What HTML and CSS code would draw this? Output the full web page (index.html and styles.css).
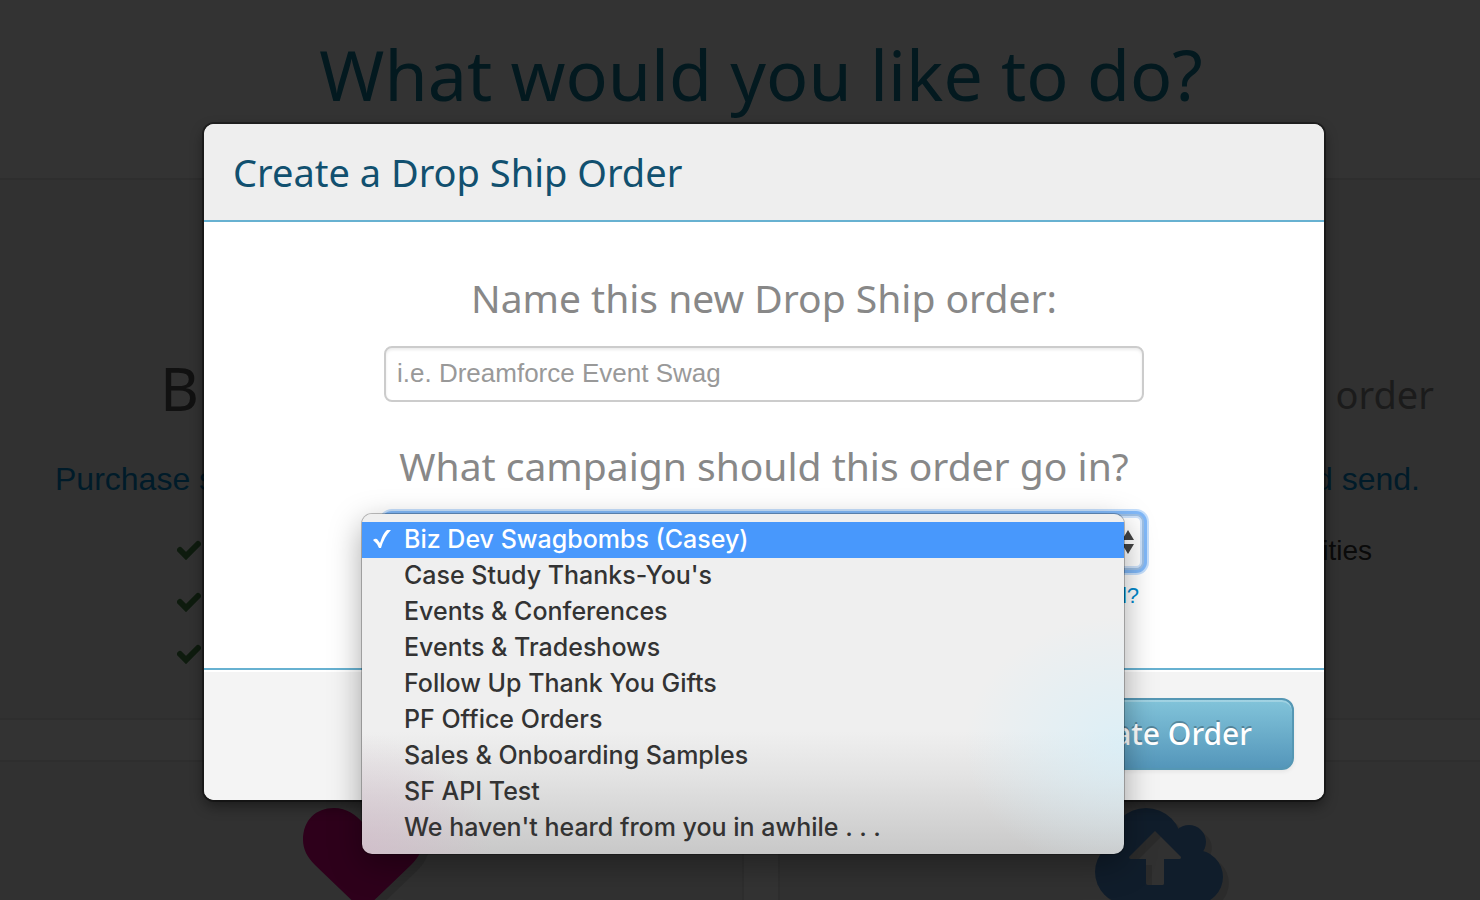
FILE: index.html
```html
<!DOCTYPE html>
<html lang="en">
<head>
<meta charset="utf-8">
<title>Create a Drop Ship Order</title>
<link rel="stylesheet" href="styles.css">
</head>
<body>
<main class="page">
  <h1 class="page-title">What would you like to do?</h1>
  <div class="cards">
    <section class="card card-start">
      <h2 class="card-title">B</h2>
      <p class="card-lead"><a href="#">Purchase s</a></p>
      <ul class="ticks">
        <li><svg viewBox="0 0 24 20" class="tick"><path d="M3 10L9 16L21 4" /></svg></li>
        <li><svg viewBox="0 0 24 20" class="tick"><path d="M3 10L9 16L21 4" /></svg></li>
        <li><svg viewBox="0 0 24 20" class="tick"><path d="M3 10L9 16L21 4" /></svg></li>
      </ul>
    </section>
    <section class="card card-end">
      <h2 class="card-title card-title-small">order</h2>
      <p class="card-lead"><a href="#">d send.</a></p>
      <p class="card-note">ities</p>
    </section>
    <section class="card card-icon">
      <svg class="heart" viewBox="0 0 128 110">
        <path class="icon-shadow" transform="translate(6 6)" d="M60 103L12 57C4 49 0 41 0 32C0 12 13 0 31 0C44 0 53 7 60 15C67 7 76 0 89 0C107 0 120 12 120 32C120 41 116 49 108 57Z"/>
        <path class="heart-fill" d="M60 103L12 57C4 49 0 41 0 32C0 12 13 0 31 0C44 0 53 7 60 15C67 7 76 0 89 0C107 0 120 12 120 32C120 41 116 49 108 57Z"/>
      </svg>
    </section>
    <section class="card card-icon">
      <svg class="cloud" viewBox="0 0 136 110">
        <defs>
          <g id="cloud-shape">
            <circle cx="32" cy="64" r="32"/>
            <circle cx="51" cy="36" r="36"/>
            <circle cx="94" cy="34" r="17"/>
            <circle cx="101" cy="69" r="27"/>
            <rect x="32" y="40" width="69" height="56"/>
          </g>
          <path id="arrow-shape" d="M60 23L86 49Q86 51 84 51H69V75Q69 77 67 77H53Q51 77 51 75V51H36Q34 51 34 49Z"/>
          <clipPath id="arrow-clip"><use href="#arrow-shape"/></clipPath>
        </defs>
        <use class="icon-shadow" href="#cloud-shape" transform="translate(6 6)"/>
        <use class="cloud-fill" href="#cloud-shape"/>
        <use class="icon-shadow" href="#arrow-shape"/>
        <g clip-path="url(#arrow-clip)"><use class="arrow-fill" href="#arrow-shape" transform="translate(6 6)"/></g>
      </svg>
    </section>
  </div>
</main>

<div class="overlay">
  <form class="modal" role="dialog" aria-labelledby="modal-title">
    <header class="modal-header"><h2 id="modal-title" class="modal-title">Create a Drop Ship Order</h2></header>
    <div class="modal-body">
      <label class="field-label" for="order-name">Name this new Drop Ship order:</label>
      <input class="text-input" id="order-name" type="text" placeholder="i.e. Dreamforce Event Swag">
      <label class="field-label field-label-next" for="campaign">What campaign should this order go in?</label>
      <div class="select-wrap">
        <select class="campaign-select" id="campaign"><option>Biz Dev Swagbombs (Casey)</option></select>
        <svg class="select-arrows" viewBox="0 0 12 24"><path d="M6 0L12 10H0Z M0 14H12L6 24Z"/></svg>
        <ul class="menu" role="listbox" aria-label="Campaign">
          <li class="menu-item menu-item-active" role="option" aria-selected="true"><svg class="menu-check" viewBox="0 0 18 20"><path d="M0 11Q2 9 4 10L7 14Q10 4 14 1L18 1Q11 8 8 19H6Q4 14 0 11Z"/></svg>Biz Dev Swagbombs (Casey)</li>
          <li class="menu-item" role="option">Case Study Thanks-You's</li>
          <li class="menu-item" role="option">Events &amp; Conferences</li>
          <li class="menu-item" role="option">Events &amp; Tradeshows</li>
          <li class="menu-item" role="option">Follow Up Thank You Gifts</li>
          <li class="menu-item" role="option">PF Office Orders</li>
          <li class="menu-item" role="option">Sales &amp; Onboarding Samples</li>
          <li class="menu-item" role="option">SF API Test</li>
          <li class="menu-item" role="option">We haven't heard from you in awhile . . .</li>
        </ul>
      </div>
      <a class="help-link" href="#">l?</a>
    </div>
    <footer class="modal-footer"><button class="submit" type="button">Create Order</button></footer>
  </form>
</div>
</body>
</html>
```
FILE: styles.css
```css
* { box-sizing: border-box; }

html, body { height: 100%; }

body {
  margin: 0;
  overflow: hidden;
  background: #fff;
  color: #333;
  font-family: "Liberation Sans", Arial, sans-serif;
}

h1, h2, p, ul { margin: 0; padding: 0; font-weight: 400; }
ul { list-style: none; }
a { color: #08c; text-decoration: none; }

.page {
  height: 100%;
  margin: 0 -44px 0 -2px;
  overflow: hidden;
}

.page-title {
  padding: 24px 0 54px;
  color: #0f7d9b;
  font: 70px/100px "Noto Sans", sans-serif;
  text-align: center;
}

.cards {
  display: grid;
  grid-template-columns: 1fr 1fr;
  gap: 40px 34px;
}

.card {
  min-height: 542px;
  border: 2px solid #e4e4e4;
  background: #f5f5f5;
}

.card-start { padding: 164px 0 0 55px; }
.card-end { padding: 164px 102px 0 0; text-align: right; }

.card-title {
  padding-left: 105px;
  color: #555;
  font: 60px/88px "Noto Sans", sans-serif;
}

.card-title-small {
  margin-right: -14px;
  padding-top: 12px;
  color: #888;
  font-size: 38px;
  line-height: 76px;
}

.card-lead { padding-top: 25px; font-size: 32px; line-height: 44px; }
.card-note { padding: 28px 48px 0 0; font-size: 28px; line-height: 44px; }

.ticks { padding: 23px 0 0 122px; }
.ticks li { display: flex; align-items: center; height: 52px; }

.tick {
  width: 24px;
  height: 20px;
  fill: none;
  stroke: #468847;
  stroke-width: 6;
  stroke-linejoin: miter;
  stroke-linecap: round;
}

.card-icon { padding-top: 46px; }
.heart { display: block; width: 128px; height: 110px; margin-left: 303px; }
.cloud { display: block; width: 136px; height: 110px; margin-left: 315px; }
.icon-shadow { fill: #d8d8d8; }
.heart-fill { fill: #e60087; }
.cloud-fill { fill: #5091d7; }
.arrow-fill { fill: #f5f5f5; }

.overlay {
  position: absolute;
  inset: 0;
  padding: 124px 0 0 48px;
  background: rgba(0, 0, 0, .8);
}

.modal {
  width: 1120px;
  max-width: 100%;
  margin: 0 auto;
  border-radius: 10px;
  background: #fff;
  box-shadow: 0 0 0 2px rgba(0, 0, 0, .35), 0 6px 14px rgba(0, 0, 0, .45);
}

.modal-header {
  padding: 20px 29px;
  border-bottom: 2px solid #67b1d1;
  border-radius: 10px 10px 0 0;
  background: #eee;
}

.modal-title {
  color: #11506f;
  font: 38px/56px "Noto Sans", sans-serif;
}

.modal-body {
  display: flex;
  flex-direction: column;
  padding: 48px 180px 56px;
}

.field-label {
  color: #888;
  font: 39px/56px "Noto Sans", sans-serif;
  text-align: center;
}

.field-label-next { margin-top: 36px; }

.text-input, .campaign-select {
  width: 100%;
  height: 56px;
  border: 2px solid #ccc;
  border-radius: 8px;
  background: #fff;
  font: 26px/36px "Liberation Sans", Arial, sans-serif;
}

.text-input {
  margin-top: 20px;
  padding: 0 11px 2px;
  box-shadow: inset 0 2px 3px rgba(0, 0, 0, .08);
}

.text-input::placeholder { color: #999; opacity: 1; }

.select-wrap { position: relative; margin-top: 20px; }

.campaign-select {
  display: block;
  padding: 0 12px;
  border-color: #9dbfe4;
  appearance: none;
  box-shadow: inset 0 0 0 2px #cde2fb, 0 0 0 3px #80b8f8, 0 0 0 5px #c5dffc;
}

.select-arrows {
  position: absolute;
  top: 16px;
  right: 10px;
  width: 12px;
  height: 24px;
  fill: #444;
}

.menu {
  position: absolute;
  top: 0;
  right: 20px;
  left: -22px;
  padding: 8px 0;
  border-radius: 10px;
  background:
    radial-gradient(ellipse 160px 130px at 100% 68%, rgba(214, 239, 249, .75), transparent),
    radial-gradient(ellipse 130px 120px at 0 100%, rgba(214, 185, 203, .6), transparent),
    linear-gradient(#efefef 64%, #e3e3e3 77%, #c8c8c8);
  box-shadow: 0 0 0 1px rgba(0, 0, 0, .25), 0 10px 32px rgba(0, 0, 0, .35);
}

.menu-item {
  position: relative;
  padding-left: 42px;
  color: #333;
  font: 500 25px/34px Inter, sans-serif;
  padding-bottom: 2px;
}

.menu-item-active { background: #4898fc; color: #fff; }

.menu-check {
  position: absolute;
  top: 7px;
  left: 11px;
  width: 18px;
  height: 20px;
  fill: #fff;
}

.help-link {
  align-self: flex-end;
  padding: 10px 5px 0 0;
  font-size: 22px;
  line-height: 32px;
}

.modal-footer {
  display: flex;
  justify-content: flex-end;
  padding: 28px 30px 30px;
  border-top: 2px solid #67b1d1;
  border-radius: 0 0 10px 10px;
  background: #f4f4f4;
  box-shadow: inset 0 2px 0 #fff;
}

.submit {
  height: 72px;
  padding: 0 40px;
  border: 2px solid #5597b4;
  border-radius: 12px;
  background: linear-gradient(#82c4da, #5496ba);
  box-shadow: inset 0 2px 0 rgba(255, 255, 255, .25), 0 2px 4px rgba(0, 0, 0, .06);
  color: #fff;
  font: 500 30px/40px "Noto Sans", sans-serif;
  text-shadow: 0 -2px 0 rgba(0, 0, 0, .25);
}
```
